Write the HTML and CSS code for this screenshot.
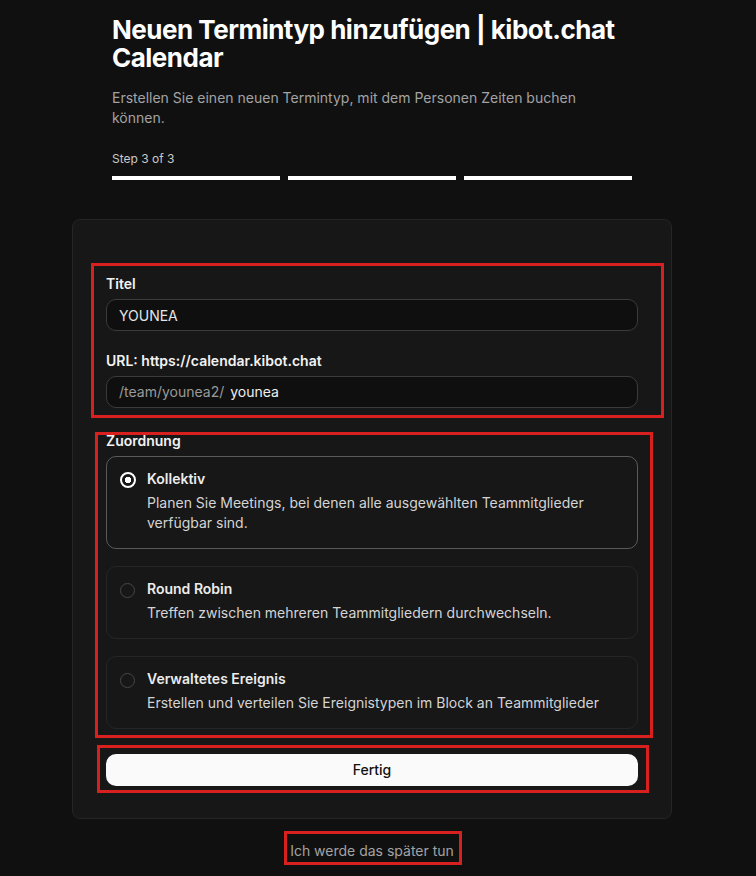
FILE: index.html
```html
<!DOCTYPE html>
<html lang="de">
<head>
    <meta charset="UTF-8">
    <meta name="viewport" content="width=device-width, initial-scale=1.0">
    <title>Neuen Termintyp hinzufügen | kibot.chat Calendar</title>
    <link rel="stylesheet" href="styles.css">
</head>
<body>
    <div class="page">
        <header class="intro">
            <h1>Neuen Termintyp hinzufügen | kibot.chat Calendar</h1>
            <p class="subtitle">Erstellen Sie einen neuen Termintyp, mit dem Personen Zeiten buchen können.</p>
            <div class="step-label">Step 3 of 3</div>
            <div class="steps">
                <span class="step done"></span>
                <span class="step done"></span>
                <span class="step done"></span>
            </div>
        </header>

        <form class="card" onsubmit="return false">
            <div class="section marked details">
                <label class="field-label" for="title">Titel</label>
                <input class="text-input" id="title" type="text" value="YOUNEA">

                <label class="field-label url-label" for="slug">URL: https://calendar.kibot.chat</label>
                <div class="text-input prefixed">
                    <span class="prefix">/team/younea2/</span>
                    <input id="slug" type="text" value="younea">
                </div>
            </div>

            <div class="section marked assignment">
                <div class="field-label">Zuordnung</div>
                <div class="options">
                    <label class="option selected">
                        <input type="radio" name="scheduling" value="collective" checked>
                        <span class="radio"></span>
                        <span class="option-text">
                            <span class="option-title">Kollektiv</span>
                            <span class="option-desc">Planen Sie Meetings, bei denen alle ausgewählten Teammitglieder verfügbar sind.</span>
                        </span>
                    </label>
                    <label class="option">
                        <input type="radio" name="scheduling" value="round-robin">
                        <span class="radio"></span>
                        <span class="option-text">
                            <span class="option-title">Round Robin</span>
                            <span class="option-desc">Treffen zwischen mehreren Teammitgliedern durchwechseln.</span>
                        </span>
                    </label>
                    <label class="option">
                        <input type="radio" name="scheduling" value="managed">
                        <span class="radio"></span>
                        <span class="option-text">
                            <span class="option-title">Verwaltetes Ereignis</span>
                            <span class="option-desc">Erstellen und verteilen Sie Ereignistypen im Block an Teammitglieder</span>
                        </span>
                    </label>
                </div>
            </div>

            <div class="section marked submit">
                <button class="primary" type="submit">Fertig</button>
            </div>
        </form>

        <div class="later-wrap">
            <a class="later marked" href="#">Ich werde das später tun</a>
        </div>
    </div>
</body>
</html>
```

FILE: styles.css
```css
body {
    margin: 0;
    padding-right: 12px;
    background-color: #101010;
    color: #ededed;
    font-family: Inter, "Noto Sans", Arial, sans-serif;
    font-size: 14px;
    line-height: 20px;
}
.page {
    width: 600px;
    margin: 0 auto;
    padding: 16px 0 24px;
}
.intro {
    width: 520px;
    margin: 0 auto;
}
h1 {
    margin: 0;
    font-size: 26px;
    line-height: 28px;
    font-weight: 700;
    letter-spacing: -0.5px;
    color: #ffffff;
}
.subtitle {
    margin: 16px 0 0;
    color: #a3a3a3;
}
.step-label {
    margin-top: 21px;
    font-size: 12px;
    color: #c9c9c9;
}
.steps {
    display: flex;
    gap: 8px;
    margin-top: 7px;
}
.step {
    flex: 1;
    height: 4px;
    background-color: #3a3a3a;
}
.step.done {
    background-color: #ffffff;
}

.card {
    margin-top: 39px;
    padding: 54px 33px 32px;
    background-color: #171717;
    border: 1px solid #252525;
    border-radius: 8px;
}

/* red highlight frames around the form sections */
.marked {
    position: relative;
}
.marked::after {
    content: "";
    position: absolute;
    border: 3px solid #d8201f;
    pointer-events: none;
}
.details::after {
    top: -11px;
    left: -15px;
    right: -26px;
    bottom: -10px;
}
.assignment::after {
    top: 1px;
    left: -11px;
    right: -15px;
    bottom: -9px;
}
.submit::after {
    top: -9px;
    left: -9px;
    right: -11px;
    bottom: -7px;
}
.later::after {
    top: -10px;
    left: -6px;
    right: -8px;
    bottom: -4px;
}

.field-label {
    display: block;
    margin-bottom: 5px;
    font-weight: 600;
    color: #f2f2f2;
}
.url-label {
    margin-top: 20px;
}
.text-input {
    display: block;
    width: 100%;
    height: 32px;
    box-sizing: border-box;
    padding: 0 12px;
    background-color: #0f0f0f;
    border: 1px solid #3b3b3b;
    border-radius: 10px;
    color: #e5e5e5;
    font: inherit;
}
.prefixed {
    display: flex;
    align-items: center;
}
.prefix {
    color: #9a9a9a;
}
.prefixed input {
    flex: 1;
    margin-left: 6px;
    padding: 0;
    border: none;
    background: transparent;
    color: #f0f0f0;
    font: inherit;
    outline: none;
}

.assignment {
    margin-top: 23px;
}
.options {
    display: flex;
    flex-direction: column;
    gap: 17px;
}
.option {
    display: flex;
    align-items: flex-start;
    gap: 12px;
    padding: 12px 16px 15px 13px;
    border: 1px solid #252525;
    border-radius: 10px;
    cursor: pointer;
}
.option.selected {
    border-color: #5a5a5a;
}
.option input {
    display: none;
}
.radio {
    flex: none;
    width: 15px;
    height: 15px;
    margin-top: 4px;
    border: 1px solid #474747;
    border-radius: 50%;
    box-sizing: border-box;
}
.option.selected .radio {
    width: 16px;
    height: 16px;
    margin-top: 3px;
    margin-right: -1px;
    border: 2px solid #ffffff;
    background: radial-gradient(circle, #ffffff 0 3px, #171717 3.5px);
}
.option-text {
    display: flex;
    flex-direction: column;
    gap: 4px;
}
.option-title {
    font-weight: 600;
    color: #ececec;
}
.option-desc {
    color: #d4d4d4;
}

.submit {
    margin-top: 25px;
}
.primary {
    display: block;
    width: 100%;
    height: 32px;
    background-color: #fafafa;
    color: #111111;
    border: none;
    border-radius: 10px;
    font: inherit;
    font-weight: 500;
    cursor: pointer;
}

.later-wrap {
    margin-top: 22px;
    text-align: center;
}
.later {
    display: inline-block;
    color: #a3a3a3;
    text-decoration: none;
}
```
